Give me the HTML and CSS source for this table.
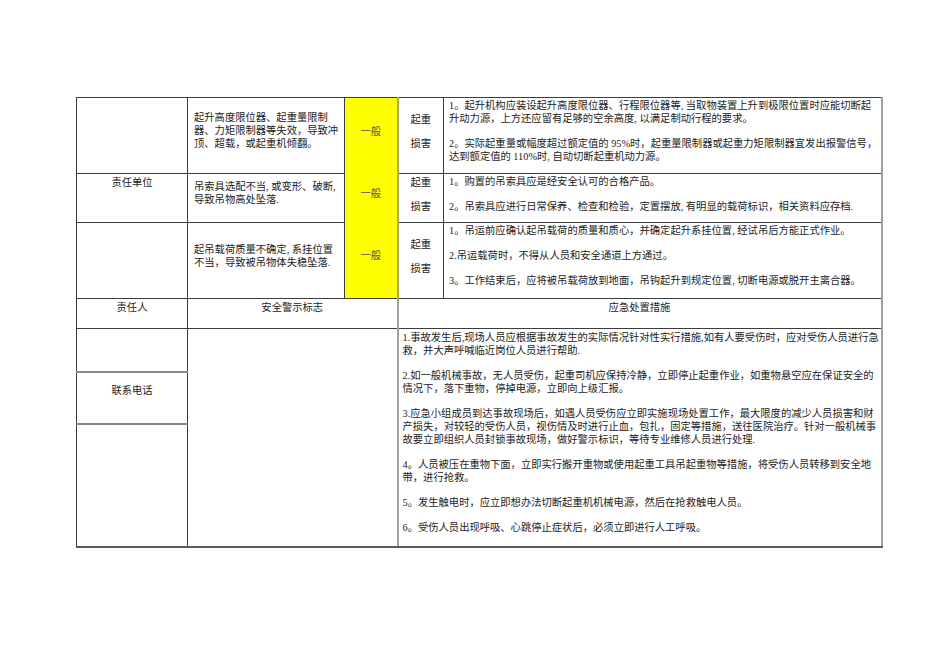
FILE: index.html
```html
<!DOCTYPE html>
<html lang="zh-CN">
<head>
<meta charset="utf-8">
<title>起重伤害风险告知</title>
<link rel="stylesheet" href="styles.css">
</head>
<body>
<div class="page">
<table class="risk">
<colgroup>
<col class="c-unit"><col class="c-cause"><col class="c-level"><col class="c-type"><col class="c-measure">
</colgroup>
<tbody>
<tr class="r-a">
<td class="unit"></td>
<td class="cause">起升高度限位器、起重量限制<br>器、力矩限制器等失效，导致冲<br>顶、超载，或起重机倾翻。</td>
<td class="level open-bottom">一般</td>
<td class="type"><span>起重</span><span>损害</span></td>
<td class="measure"><p>1。起升机构应装设起升高度限位器、行程限位器等, 当取物装置上升到极限位置时应能切断起<br>升动力源，上方还应留有足够的空余高度, 以满足制动行程的要求。</p><p>2。实际起重量或幅度超过额定值的 95%时，起重量限制器或起重力矩限制器宜发出报警信号，<br>达到额定值的 110%时, 自动切断起重机动力源。</p></td>
</tr>
<tr class="r-b">
<td class="unit label">责任单位</td>
<td class="cause">吊索具选配不当, 或变形、破断,<br>导致吊物高处坠落.</td>
<td class="level open-bottom">一般</td>
<td class="type"><span>起重</span><span>损害</span></td>
<td class="measure"><p>1。购置的吊索具应是经安全认可的合格产品。</p><p>2。吊索具应进行日常保养、检查和检验，定置摆放, 有明显的载荷标识，相关资料应存档.</p></td>
</tr>
<tr class="r-c">
<td class="unit"></td>
<td class="cause">起吊载荷质量不确定, 系挂位置<br>不当，导致被吊物体失稳坠落.</td>
<td class="level">一般</td>
<td class="type"><span>起重</span><span>损害</span></td>
<td class="measure"><p>1。吊运前应确认起吊载荷的质量和质心，并确定起升系挂位置, 经试吊后方能正式作业。</p><p>2.吊运载荷时，不得从人员和安全通道上方通过。</p><p>3。工作结束后，应将被吊载荷放到地面，吊钩起升到规定位置, 切断电源或脱开主离合器。</p></td>
</tr>
<tr class="r-head">
<td class="head">责任人</td>
<td class="head" colspan="2">安全警示标志</td>
<td class="head head-measure" colspan="2">应急处置措施</td>
</tr>
<tr class="r-s1">
<td class="unit split"></td>
<td class="sign" colspan="2" rowspan="3"></td>
<td class="emergency" colspan="2" rowspan="3">
<p>1.事故发生后,现场人员应根据事故发生的实际情况针对性实行措施,如有人要受伤时，应对受伤人员进行急<br>救，并大声呼喊临近岗位人员进行帮助.</p>
<p>2.如一般机械事故，无人员受伤，起重司机应保持冷静，立即停止起重作业，如重物悬空应在保证安全的<br>情况下，落下重物，停掉电源，立即向上级汇报。</p>
<p>3.应急小组成员到达事故现场后，如遇人员受伤应立即实施现场处置工作，最大限度的减少人员损害和财<br>产损失，对较轻的受伤人员，视伤情及时进行止血，包扎，固定等措施，送往医院治疗。针对一般机械事<br>故要立即组织人员封锁事故现场，做好警示标识，等待专业维修人员进行处理.</p>
<p>4。人员被压在重物下面，立即实行搬开重物或使用起重工具吊起重物等措施，将受伤人员转移到安全地<br>带，进行抢救。</p>
<p>5。发生触电时，应立即想办法切断起重机机械电源，然后在抢救触电人员。</p>
<p>6。受伤人员出现呼吸、心跳停止症状后，必须立即进行人工呼吸。</p>
</td>
</tr>
<tr class="r-s2">
<td class="unit split phone">联系电话</td>
</tr>
<tr class="r-s3">
<td class="unit last"></td>
</tr>
</tbody>
</table>
</div>
</body>
</html>
```

FILE: styles.css
```css
html, body {
  margin: 0;
  background: #ffffff;
}

body {
  font-family: "Liberation Serif", "Noto Sans CJK SC", serif;
  font-size: 10.3px;
  line-height: 13px;
  color: #222222;
}

.page {
  padding: 97px 0 0 76px;
}

.risk {
  border-collapse: collapse;
  table-layout: fixed;
  width: 805px;
}

.c-unit { width: 111px; }
.c-cause { width: 157px; }
.c-level { width: 53px; }
.c-type { width: 46px; }
.c-measure { width: 438px; }

.risk td {
  border: 1px solid #3c3c3c;
  padding: 0;
  vertical-align: top;
}

.r-a { height: 76px; }
.r-b { height: 49px; }
.r-c { height: 76px; }
.r-head { height: 30px; }
.r-s1 { height: 43px; }
.r-s2 { height: 51px; }
.r-s3 { height: 121px; }

.unit {
  text-align: center;
}

.unit.label {
  padding-top: 2px;
}

.cause {
  vertical-align: middle !important;
  white-space: nowrap;
  padding: 0 4px 10px 6px !important;
}

.level {
  background: #ffff00;
  color: #555555;
  text-align: center;
  vertical-align: middle !important;
  padding-bottom: 9px !important;
  border-right: 2px solid #a8a860 !important;
}

.level.open-bottom {
  border-bottom-style: hidden !important;
}

.type {
  text-align: center;
  vertical-align: middle !important;
  padding-bottom: 8px !important;
}

.type span {
  display: block;
}

.type span + span {
  margin-top: 11px;
}

.measure {
  padding: 1px 4px 0 5px !important;
  border-right: 2px solid #a0a0a0 !important;
}

.measure p,
.emergency p {
  margin: 0 0 12px;
  white-space: nowrap;
}

.measure p:last-child {
  margin-bottom: 0;
}

.head {
  text-align: center;
  padding-top: 2px !important;
}

.head-measure {
  border-left: 2px solid #a0a0a0 !important;
  border-right: 2px solid #a0a0a0 !important;
}

.split {
  border-bottom: 2px solid #8a8a8a !important;
}

.phone {
  padding-top: 11px !important;
}

.last,
.sign {
  border-bottom: 2px solid #5a5a5a !important;
}

.emergency {
  padding: 2px 2px 0 4px !important;
  border-left: 2px solid #a0a0a0 !important;
  border-right: 2px solid #a0a0a0 !important;
  border-bottom: 2px solid #5a5a5a !important;
}
```
